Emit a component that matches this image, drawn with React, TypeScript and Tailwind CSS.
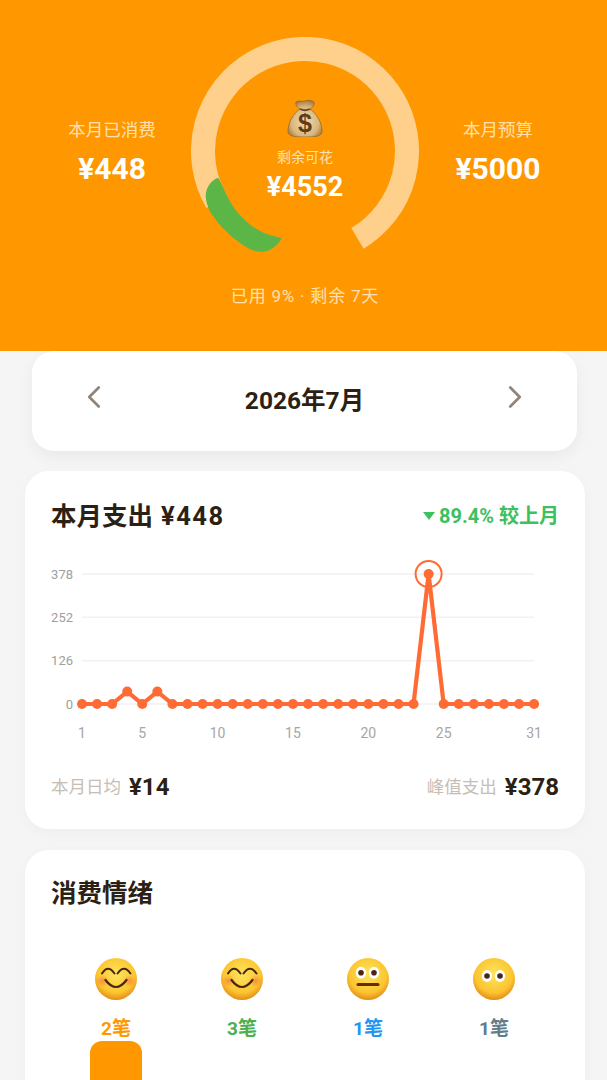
import React from "react";
import { ChevronLeft, ChevronRight } from "lucide-react";

const values = [0, 0, 0, 36, 0, 36, 0, 0, 0, 0, 0, 0, 0, 0, 0, 0, 0, 0, 0, 0, 0, 0, 0, 378, 0, 0, 0, 0, 0, 0, 0];
const chartX = (i: number) => 57 + i * 15.07;
const chartY = (v: number) => 154 - (v / 378) * 130;
const yTicks = [378, 252, 126, 0];
const xTicks = [1, 5, 10, 15, 20, 25, 31];

const FaceBase = ({ id }: { id: string }) => (
  <>
    <defs>
      <radialGradient id={id} cx="50%" cy="38%" r="62%">
        <stop offset="0%" stopColor="#fde45c" />
        <stop offset="72%" stopColor="#fbc530" />
        <stop offset="100%" stopColor="#e58c18" />
      </radialGradient>
      <radialGradient id={`${id}-cheek`}>
        <stop offset="0%" stopColor="#f4703c" stopOpacity="0.65" />
        <stop offset="100%" stopColor="#f4703c" stopOpacity="0" />
      </radialGradient>
    </defs>
    <circle cx="21" cy="21" r="21" fill={`url(#${id})`} />
  </>
);

const BlushFace = ({ id }: { id: string }) => (
  <svg width="42" height="42" viewBox="0 0 42 42">
    <FaceBase id={id} />
    <ellipse cx="7.5" cy="23" rx="7" ry="6" fill={`url(#${id}-cheek)`} />
    <ellipse cx="34.5" cy="23" rx="7" ry="6" fill={`url(#${id}-cheek)`} />
    <path d="M7 15.5 Q13 6 19.5 15.5 M22.5 15.5 Q29 6 35.5 15.5" stroke="#4a2511" strokeWidth="2" fill="none" strokeLinecap="round" />
    <path d="M10.5 22 Q21 36 31.5 22" stroke="#4a2511" strokeWidth="2.2" fill="none" strokeLinecap="round" />
  </svg>
);

const StareFace = ({ id, eyeY, mouth }: { id: string; eyeY: number; mouth: boolean }) => (
  <svg width="42" height="42" viewBox="0 0 42 42">
    <FaceBase id={id} />
    <ellipse cx="14" cy={eyeY} rx="5.2" ry="6" fill="#fff" />
    <ellipse cx="27" cy={eyeY} rx="5.2" ry="6" fill="#fff" />
    <circle cx="14" cy={eyeY} r="2.8" fill="#4a2511" />
    <circle cx="27" cy={eyeY} r="2.8" fill="#4a2511" />
    {mouth && <rect x="9.5" y="25" width="23" height="3" rx="1.5" fill="#6b2a05" />}
  </svg>
);

const MoneyBag = () => (
  <svg width="36" height="38" viewBox="0 0 36 38">
    <defs>
      <radialGradient id="bag" cx="50%" cy="58%" r="58%">
        <stop offset="0%" stopColor="#f2dcae" />
        <stop offset="70%" stopColor="#d9b67c" />
        <stop offset="100%" stopColor="#a87b42" />
      </radialGradient>
    </defs>
    <path d="M9 3 C12 1 15 3 18 2 C21 1 24 1 27 3 C28 6 25 9 23 10 C29 14 35 23 35 32 C35 37 30 38 18 38 C6 38 1 37 1 32 C1 23 7 14 13 10 C11 9 8 6 9 3 Z" fill="url(#bag)" stroke="#8a6330" strokeWidth="0.7" />
    <path d="M13 10 Q18 12.5 23 10" stroke="#6f4c22" strokeWidth="1.8" fill="none" />
    <text x="18" y="33" textAnchor="middle" fontSize="25" fontWeight="700" fill="#5f3c1c" fontFamily="Liberation Sans, sans-serif">$</text>
  </svg>
);

const Ring = () => (
  <svg className="absolute inset-0" width="228" height="228" viewBox="0 0 228 228">
    <path d="M25.7 165 A102 102 0 1 1 166.5 201.4" stroke="#ffd08c" strokeWidth="24" fill="none" />
    <path
      d="M27.3 140.7 C20 143 14.5 151 14.7 159.7 C15 165 17 170 19 174.7 C24 182 30 190 37.3 196.3 C43 202 50 207 57.3 211.3 C62 214 67 214.7 72.3 214.7 C79 214.5 87 208 90.7 201.3 C82 199 74 197 67.3 193 C60 189 53 183 47.3 176.3 C42 170 38.5 164 35.7 158 C33 152 30 146 27.3 140.7 Z"
      fill="#5cb647"
    />
  </svg>
);

const Stat = ({ label, value }: { label: string; value: string }) => (
  <div className="flex flex-col items-center pt-[118px]">
    <div className="text-[17.5px] leading-6 whitespace-nowrap text-[#ffe0b2]">{label}</div>
    <div className="mt-[9px] text-[30px] leading-9 font-bold text-white">{value}</div>
  </div>
);

const Mood = ({ face, count, color }: { face: React.ReactNode; count: string; color: string }) => (
  <div className="flex flex-col items-center">
    {face}
    <div className={`mt-[17px] text-[19px] leading-6 font-bold ${color}`}>{count}</div>
  </div>
);

export default function App() {
  return (
    <div className="h-[1080px] overflow-hidden bg-[#f5f5f5] font-['Roboto','Noto_Sans_CJK_SC',sans-serif]">
      <header className="flex h-[351px] bg-[#ff9800]">
        <div className="w-[191px] pl-[33px]">
          <Stat label="本月已消费" value="¥448" />
        </div>
        <div className="w-[228px] pt-[37px]">
          <div className="relative h-[228px]">
            <Ring />
            <div className="relative flex flex-col items-center pt-[62px]">
              <MoneyBag />
              <div className="mt-[10px] text-[14px] leading-5 text-[#ffe0b2]">剩余可花</div>
              <div className="mt-[4px] text-[27px] leading-8 font-bold text-white">¥4552</div>
            </div>
          </div>
          <div className="mt-[19px] text-center text-[17px] leading-6 tracking-[0.8px] whitespace-nowrap text-[#ffe0b2]">已用 9% · 剩余 7天</div>
        </div>
        <div className="w-[188px] pr-[30px]">
          <Stat label="本月预算" value="¥5000" />
        </div>
      </header>

      <section className="mr-[30px] ml-[32px] flex h-[100px] items-center justify-between rounded-[22px] bg-white px-[43px] pb-[8px] shadow-[0_6px_16px_rgba(0,0,0,0.05)]">
        <ChevronLeft className="h-[38px] w-[38px] text-[#91857a]" strokeWidth={1.7} />
        <div className="pt-[8px] text-[24.5px] font-bold text-[#2c1f14]">2026年7月</div>
        <ChevronRight className="h-[38px] w-[38px] text-[#91857a]" strokeWidth={1.7} />
      </section>

      <section className="mt-[20px] mr-[22px] ml-[25px] h-[358px] rounded-[24px] bg-white px-[26px] shadow-[0_4px_14px_rgba(0,0,0,0.03)]">
        <div className="flex items-center justify-between pt-[27px]">
          <div className="flex gap-[8px] text-[25.5px] leading-9 font-bold text-[#2c1f14]">
            <span>本月支出</span>
            <span className="tracking-[1.5px]">¥448</span>
          </div>
          <div className="flex items-center gap-[4px] text-[20px] leading-7 font-bold text-[#3cc060]">
            <svg width="12" height="8" viewBox="0 0 12 8">
              <path d="M0 0H12L6 8Z" fill="#3cc060" />
            </svg>
            89.4% 较上月
          </div>
        </div>
        <svg className="mt-[16px] -ml-[26px]" width="560" height="210" viewBox="0 0 560 210">
          {yTicks.map((t) => (
            <g key={t}>
              <line x1="57" x2="509" y1={chartY(t)} y2={chartY(t)} stroke="#f1f1f1" strokeWidth="1.5" />
              <text x="48" y={chartY(t) + 4.5} textAnchor="end" fontSize="13" fill="#9e9e9e">{t}</text>
            </g>
          ))}
          {xTicks.map((t) => (
            <text key={t} x={chartX(t - 1)} y="188" textAnchor="middle" fontSize="14" fill="#a6a6a6">{t}</text>
          ))}
          <polyline
            points={values.map((v, i) => `${chartX(i)},${chartY(v)}`).join(" ")}
            fill="none"
            stroke="#ff6b35"
            strokeWidth="4.2"
            strokeLinejoin="round"
          />
          {values.map((v, i) => (
            <circle key={i} cx={chartX(i)} cy={chartY(v)} r="5" fill="#ff6b35" />
          ))}
          <circle cx={chartX(23)} cy={chartY(378)} r="13" fill="none" stroke="#ff6b35" strokeWidth="2" />
        </svg>
        <div className="mt-[11px] flex items-center justify-between">
          <div className="flex items-center gap-[8px]">
            <span className="text-[17.5px] text-[#c6beb4]">本月日均</span>
            <span className="text-[24px] leading-8 font-bold text-[#2c1f14]">¥14</span>
          </div>
          <div className="flex items-center gap-[8px]">
            <span className="text-[17.5px] text-[#c6beb4]">峰值支出</span>
            <span className="text-[24px] leading-8 font-bold text-[#2c1f14]">¥378</span>
          </div>
        </div>
      </section>

      <section className="mt-[21px] mr-[22px] ml-[25px] rounded-t-[24px] bg-white pt-[25px] pb-[20px] shadow-[0_4px_14px_rgba(0,0,0,0.03)]">
        <div className="pl-[26px] text-[25.5px] leading-9 font-bold text-[#2c1f14]">消费情绪</div>
        <div className="mt-[47px] grid grid-cols-4 px-[28px]">
          <div className="flex flex-col items-center">
            <Mood face={<BlushFace id="f1" />} count="2笔" color="text-[#ff9800]" />
            <div className="h-[60px] w-[52px] rounded-t-[12px] bg-[#ff9800]" />
          </div>
          <Mood face={<BlushFace id="f2" />} count="3笔" color="text-[#4caf50]" />
          <Mood face={<StareFace id="f3" eyeY={14.7} mouth />} count="1笔" color="text-[#2196f3]" />
          <Mood face={<StareFace id="f4" eyeY={18} mouth={false} />} count="1笔" color="text-[#607d8b]" />
        </div>
      </section>
    </div>
  );
}
